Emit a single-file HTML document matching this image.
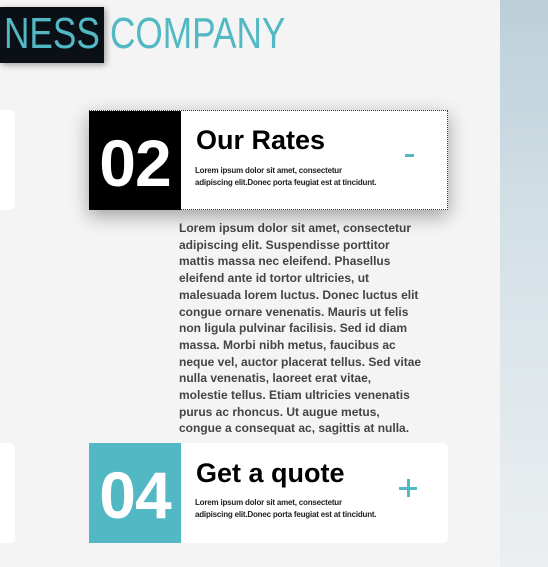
<!DOCTYPE html>
<html><head><meta charset="utf-8"><style>
*{margin:0;padding:0;box-sizing:border-box}
html,body{width:548px;height:567px;overflow:hidden}
body{background:#f4f4f4;font-family:"Liberation Sans",Arial,sans-serif;position:relative}
.right{position:absolute;left:500px;top:0;width:48px;height:567px;background:linear-gradient(180deg,#bccfd8 0%,#d6e2e8 45%,#eceff1 100%)}
.logo{position:absolute;left:0;top:7px;width:104px;height:56px;background:#0a1016;box-shadow:2px 2px 6px rgba(0,0,0,.35)}
.lt{position:absolute;top:6px;font-size:44px;color:#52b8c4;transform:scaleX(.8);transform-origin:left top;line-height:56px}
.lc{position:absolute;left:0;top:110px;width:15px;height:100px;background:#fff;border-radius:0 5px 5px 0}
.card{position:absolute;left:89px;width:359px;height:100px;background:#fff;border-radius:0 5px 5px 0}
.num{position:absolute;left:0;top:0;width:92px;height:100px;color:#fff;font-weight:bold;font-size:66px;text-align:center;line-height:104px;letter-spacing:-1px}
.title{position:absolute;left:107px;top:14px;font-size:27px;font-weight:bold;color:#000}
.small{position:absolute;left:106px;top:54px;font-size:8px;line-height:12px;color:#222;font-weight:bold;width:200px;letter-spacing:-0.2px}
.para{position:absolute;left:179px;top:220px;width:244px;font-size:12px;font-weight:bold;line-height:16.7px;color:#444}
</style></head><body>
<div class="right"></div>
<div class="logo"></div>
<div class="lt" style="left:4px">NESS</div>
<div class="lt" style="left:110px">COMPANY</div>
<div class="lc"></div>
<div class="lc" style="top:443px"></div>
<div class="para">Lorem ipsum dolor sit amet, consectetur adipiscing elit. Suspendisse porttitor mattis massa nec eleifend. Phasellus eleifend ante id tortor ultricies, ut malesuada lorem luctus. Donec luctus elit congue ornare venenatis. Mauris ut felis non ligula pulvinar facilisis. Sed id diam massa. Morbi nibh metus, faucibus ac neque vel, auctor placerat tellus. Sed vitae nulla venenatis, laoreet erat vitae, molestie tellus. Etiam ultricies venenatis purus ac rhoncus. Ut augue metus, congue a consequat ac, sagittis at nulla.</div>
<div class="card" style="top:110px;border:1px dotted #333;border-left:none;border-radius:0;box-shadow:0 6px 18px rgba(0,0,0,.35)">
 <div class="num" style="background:#000;height:99px">02</div>
 <div class="title">Our Rates</div>
 <div class="small">Lorem ipsum dolor sit amet, consectetur<br>adipiscing elit.Donec porta feugiat est at tincidunt.</div>
 <div style="position:absolute;left:316px;top:43px;width:9px;height:3px;background:#52b8c4"></div>
</div>
<div class="card" style="top:443px">
 <div class="num" style="background:#52b8c4">04</div>
 <div class="title" style="top:15px">Get a quote</div>
 <div class="small">Lorem ipsum dolor sit amet, consectetur<br>adipiscing elit.Donec porta feugiat est at tincidunt.</div>
 <div style="position:absolute;left:310px;top:44px;width:18px;height:3px;background:#52b8c4"></div>
 <div style="position:absolute;left:317.5px;top:36px;width:3px;height:18px;background:#52b8c4"></div>
</div>
</body></html>
